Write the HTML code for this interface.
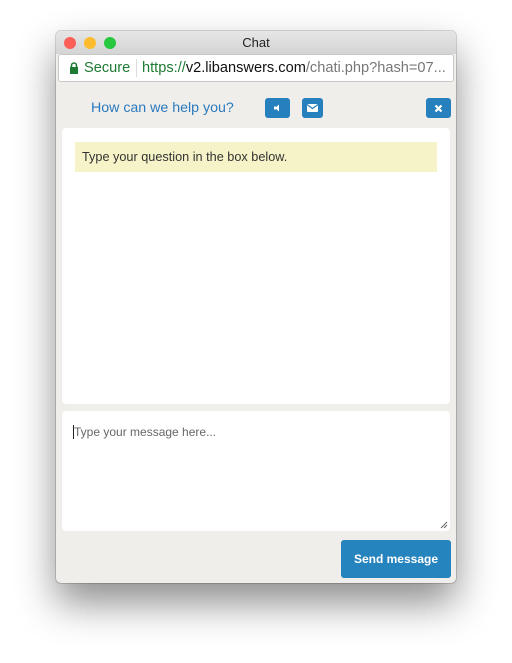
<!DOCTYPE html>
<html><head><style>
body{margin:0;width:512px;height:663px;background:#fff;font-family:"Liberation Sans",sans-serif;position:relative;overflow:hidden}
.win{position:absolute;left:56px;top:31px;width:400px;height:552px;border-radius:5px;overflow:hidden;background:#efeeea;box-shadow:0 20px 40px rgba(0,0,0,0.45),0 0 0 1px rgba(0,0,0,0.15)}
.title{height:23px;background:linear-gradient(#e6e6e6,#d4d4d4);text-align:center;font-size:13px;line-height:24px;color:#222}
.dot{position:absolute;top:6px;width:12px;height:12px;border-radius:50%}
.url{position:absolute;left:2px;top:23px;width:394px;height:26px;background:#fff;border:1px solid #c8c8c8;border-radius:3px;font-size:14.6px;line-height:26px;white-space:nowrap;overflow:hidden}
.btn{position:absolute;background:#2580bd;border-radius:3px;height:20px;top:67px}
.panel{position:absolute;background:#fff;border-radius:4px}
</style></head><body>
<div class="win">
<div class="title">Chat</div>
<div class="dot" style="left:8px;background:#fc5f57"></div>
<div class="dot" style="left:28px;background:#fdbc2e"></div>
<div class="dot" style="left:48px;background:#28c840"></div>
<div class="url"><svg style="position:absolute;left:10px;top:7px" width="10" height="12" viewBox="0 0 10 12"><rect x="1" y="5" width="8" height="7" fill="#1e7a33"/><path d="M2.5 5V3.5a2.5 2.5 0 0 1 5 0V5" stroke="#1e7a33" stroke-width="1.6" fill="none"/></svg><span style="position:absolute;left:25px;color:#1e7a33">Secure</span><span style="position:absolute;left:77px;top:4px;width:1px;height:18px;background:#ddd"></span><span style="position:absolute;left:83px"><span style="color:#1e7a33">https://</span><span style="color:#111">v2.libanswers.com</span><span style="color:#777">/chati.php?hash=07...</span></span></div>
<div style="position:absolute;left:35px;top:69px;color:#2a7abf;font-size:14.2px">How can we help you?</div>
<div class="btn" style="left:209px;width:25px"><svg width="25" height="20"><path d="M10 10l4-3.5v7z" fill="#fff"/><rect x="9" y="8.5" width="2" height="3" fill="#fff"/></svg></div>
<div class="btn" style="left:246px;width:21px"><svg width="21" height="20"><rect x="5" y="6" width="11" height="8" fill="#fff" rx="1"/><path d="M5 6.5l5.5 4 5.5-4" stroke="#2580bd" stroke-width="1.2" fill="none"/></svg></div>
<div class="btn" style="left:370px;width:25px"><svg width="25" height="20"><path d="M9.5 7.5l6 6M15.5 7.5l-6 6" stroke="#fff" stroke-width="2.2"/></svg></div>
<div class="panel" style="left:6px;top:97px;width:388px;height:276px"><div style="margin:14px 13px;background:#f6f3c8;height:30px;line-height:30px;padding-left:7px;font-size:12.7px;color:#333">Type your question in the box below.</div></div>
<div class="panel" style="left:6px;top:380px;width:388px;height:120px"><div style="position:absolute;left:11px;top:14px;font-size:12px;color:#666;border-left:1px solid #222;padding-left:0">Type your message here...</div><svg style="position:absolute;right:2px;bottom:2px" width="8" height="8"><path d="M1 7L7 1M4 7L7 4" stroke="#666"/></svg></div>
<div style="position:absolute;left:285px;top:509px;width:110px;height:38px;background:#2583bd;border-radius:3px;color:#fff;font-size:12px;font-weight:bold;text-align:center;line-height:38px">Send message</div>
</div>
</body></html>
